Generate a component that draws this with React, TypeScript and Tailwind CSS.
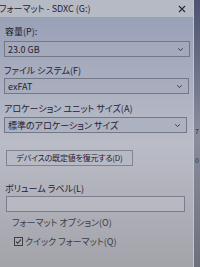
import React from "react"

const font = "font-['Noto_Sans_CJK_JP','Noto_Sans',sans-serif] [font-feature-settings:'palt']"

function Chevron() {
  return (
    <svg width="7" height="5" viewBox="0 0 7 5" className="shrink-0">
      <path d="M1.2 1.4 L3.5 3.5 L5.8 1.4" fill="none" stroke="#3a3d4a" strokeWidth="1" />
    </svg>
  )
}

function Select({ value, w }: { value: string; w: string }) {
  return (
    <div className={`${w} h-[16px] flex items-center justify-between pl-[3px] pr-[5px] border border-[#737888] bg-[#a6acbc]/50`}>
      <span className="text-[9px] leading-none text-[#1f2130]">{value}</span>
      <Chevron />
    </div>
  )
}

export default function App() {
  return (
    <div className={`w-[200px] h-[267px] flex overflow-hidden ${font}`}>
      {/* ダイアログ */}
      <div className="w-[193px] flex flex-col">
        <div className="h-[17px] flex items-center justify-between pr-[7px] bg-[#b6bac5]">
          <span className="text-[9px] leading-none text-[#22242f] -ml-[1px]">フォーマット - SDXC (G:)</span>
          <svg width="8" height="8" viewBox="0 0 8 8">
            <path d="M1 1 L7 7 M7 1 L1 7" stroke="#262834" strokeWidth="1.1" />
          </svg>
        </div>

        <div className="flex-1 flex flex-col px-[4px] bg-gradient-to-b from-[#99a1b7] via-[#babcc7] to-[#a3a3aa] text-[#1f2130]">
          <div className="mt-[8px] h-[12px] flex items-center pl-[1px] text-[9px] leading-none">容量(P):</div>
          <div className="mt-[4px]">
            <Select value="23.0 GB" w="w-[186px]" />
          </div>

          <div className="mt-[7px] h-[12px] flex items-center text-[9px] leading-none">ファイル システム(F)</div>
          <div className="mt-[2px]">
            <Select value="exFAT" w="w-[185px]" />
          </div>

          <div className="mt-[8px] h-[12px] flex items-center text-[9px] leading-none">アロケーション ユニット サイズ(A)</div>
          <div className="mt-[3px]">
            <Select value="標準のアロケーション サイズ" w="w-[183px]" />
          </div>

          <div className="mt-[17px] ml-[2px] w-[127px] h-[16px] flex items-center justify-center border border-[#80848f] bg-[#b7bac5] text-[8px] tracking-[-0.2px] leading-none whitespace-nowrap">
            デバイスの既定値を復元する(D)
          </div>

          <div className="mt-[16px] h-[12px] flex items-center pl-[1px] text-[9px] leading-none">ボリューム ラベル(L)</div>
          <div className="mt-[2px] ml-[2px] w-[179px] h-[16px] border border-[#7b7e8a] bg-[#c0c2ca]/50" />

          <div className="mt-[4px] h-[12px] flex items-center pl-[8px] text-[9px] leading-none text-[#3a3c48]">フォーマット オプション(O)</div>
          <div className="mt-[7px] h-[12px] flex items-center gap-[2px] pl-[10px] text-[9px] leading-none text-[#3a3c48]">
            <svg width="9" height="9" viewBox="0 0 9 9" className="shrink-0">
              <rect x="0.5" y="0.5" width="8" height="8" fill="none" stroke="#3c3e4a" />
              <path d="M2 4.6 L3.8 6.3 L7 2.5" fill="none" stroke="#2c2e3a" strokeWidth="1.1" />
            </svg>
            <span>クイック フォーマット(Q)</span>
          </div>
        </div>
      </div>

      {/* 右側の別ウィンドウ */}
      <div className="flex-1 flex flex-col border-l border-[#c3c5ce] bg-gradient-to-b from-[#4d5372] via-[#8a8d9c] to-[#6e707c]">
        <div className="h-[128px]" />
        <span className="pl-[1px] text-[7px] leading-none text-[#30323e]">7</span>
        <div className="h-[22px]" />
        <span className="pl-[1px] text-[7px] leading-none text-[#30323e]">0</span>
      </div>
    </div>
  )
}
